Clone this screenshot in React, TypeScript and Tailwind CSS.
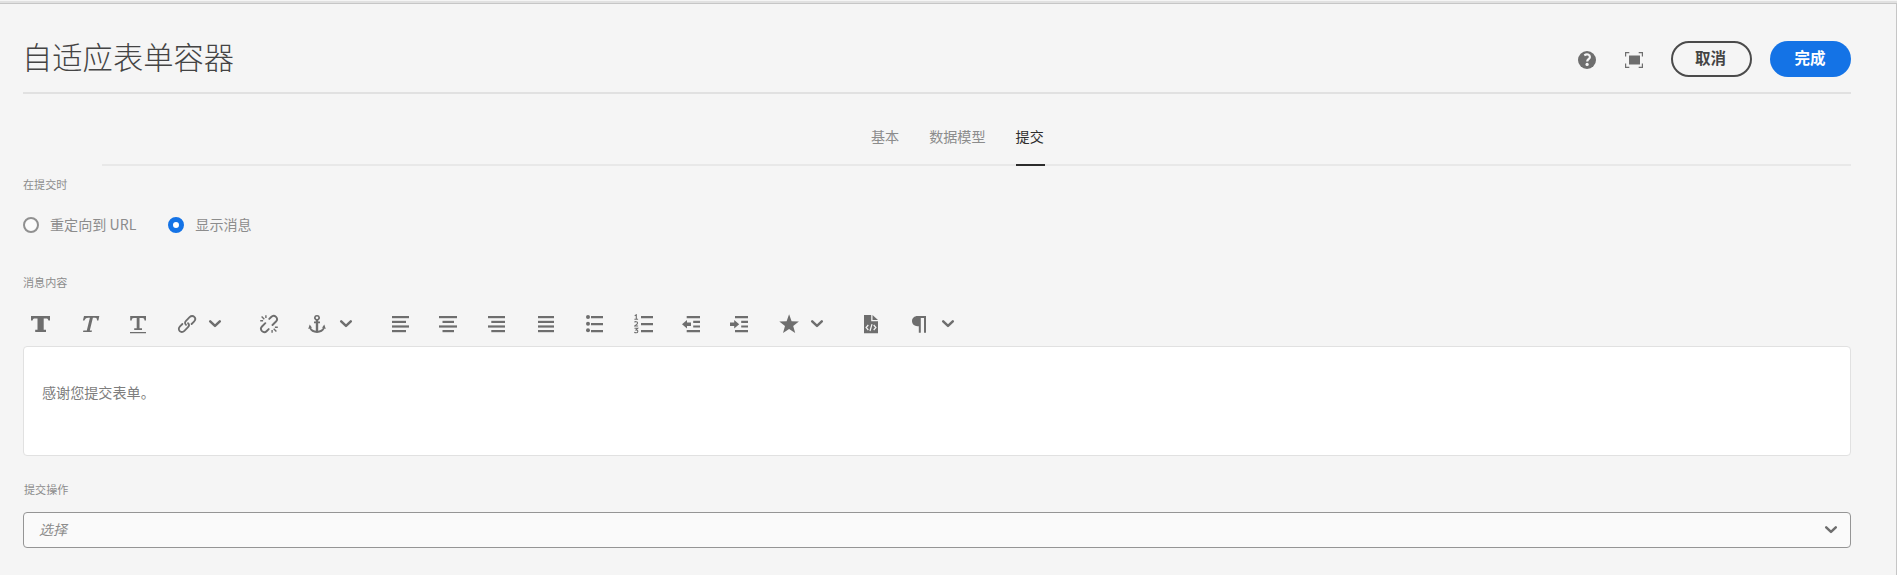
import React from "react";

type IconProps = { className?: string; children: React.ReactNode };

function Icon({ className = "", children }: IconProps) {
  return (
    <svg viewBox="0 0 20 20" width="20" height="20" fill="#6e6e6e" className={`block shrink-0 ${className}`}>
      {children}
    </svg>
  );
}

function Chevron({ className = "" }: { className?: string }) {
  return (
    <Icon className={className}>
      <path d="M5.2 7.3 L10 11.9 L14.8 7.3" fill="none" stroke="#6e6e6e" strokeWidth="2.5" strokeLinecap="round" strokeLinejoin="round" />
    </Icon>
  );
}

function Lines({ rows }: { rows: [number, number][] }) {
  const tops = [2, 6.8, 11.4, 16];
  return (
    <>
      {rows.map(([x, w], i) => (
        <rect key={i} x={x} y={tops[i]} width={w} height="2.2" />
      ))}
    </>
  );
}

function Toolbar() {
  return (
    <div className="mt-[24px] flex h-5 items-center pl-[7px]">
      <Icon>
        <path d="M1 2h19v4.600h-1.600c-.2-1.500-.8-2.100-2.400-2.100h-2.300v11.300h2.300V18H5.200v-2.200h2.300V4.500H5c-1.600 0-2.200.6-2.400 2.100H1z" />
      </Icon>
      <Icon className="ml-[30px]">
        <path d="M4 2H19.300L18.400 6.400H17C17 4.400 16.500 3.700 15 3.700H12.900L9.800 16.400H12L11.600 18H3L3.400 16.400H6.800L9.900 3.700H8.200C6.400 3.700 5.400 4.400 4.400 6.400H2.900z" />
      </Icon>
      <Icon className="ml-[28px]">
        <path d="M2.200 2h15.800v4.400h-1.500c-.1-1.600-.7-2.300-2.100-2.300h-2.900v10.100h2.500v1.800H6.200v-1.800h2.500V4.100H5.800c-1.400 0-2 .7-2.100 2.300H2.200zM2 18h16v1.200H2z" />
      </Icon>
      <Icon className="ml-[29px]">
        <g fill="none" stroke="#6e6e6e" strokeWidth="1.800" strokeLinecap="round">
          <path d="M9 10.900c-1.500-1.500-1.200-2.900 0-4.100l3.600-3.600c1.700-1.700 3.600-1.400 4.700-.3 1.200 1.200 1.300 3.100-.3 4.700l-2.400 2.400" />
          <path d="M11 9.100c1.500 1.500 1.200 2.900 0 4.100l-3.600 3.600c-1.700 1.700-3.600 1.400-4.700.3-1.200-1.200-1.300-3.100.3-4.700l2.400-2.400" />
        </g>
      </Icon>
      <Chevron className="ml-[8px]" />
      <Icon className="ml-[34px]">
        <g fill="none" stroke="#6e6e6e" strokeWidth="1.900" strokeLinecap="round">
          <path d="M10.300 4.900l1.900-1.900c1.500-1.500 3.500-1.300 4.800-.1 1.300 1.300 1.300 3.200 0 4.600l-3.500 3.500" />
          <path d="M9.700 15.100l-1.900 1.900c-1.500 1.500-3.500 1.300-4.800.1-1.300-1.300-1.300-3.200 0-4.600l3.300-3.300" />
        </g>
        <path d="M6.900 1.200v2.900M2.600 2.600l2.700 2.600M1.200 6.700h2.900M13.100 15.900v2.900M14.700 14.700l2.700 2.700M15.900 13.300h2.900" fill="none" stroke="#6e6e6e" strokeWidth="1.400" />
      </Icon>
      <Icon className="ml-[28px]">
        <path d="M10 .9a2.900 2.900 0 0 0-1.200 5.600v1.100H7v1.700h1.800v7.400c-2.600-.3-4.500-1.600-5-3.100l1.400.3-2.500-3.500L1.200 15l1.200-.4C3.400 17.300 6.300 19 10 19s6.600-1.700 7.600-4.400l1.200.4-1.500-4.600-2.500 3.500 1.400-.3c-.5 1.500-2.400 2.800-5 3.100V9.300H13V7.600h-1.800V6.500A2.900 2.900 0 0 0 10 .9zm0 1.600a1.300 1.300 0 1 1 0 2.600 1.300 1.300 0 0 1 0-2.600z" />
      </Icon>
      <Chevron className="ml-[9px]" />
      <Icon className="ml-[34px]"><Lines rows={[[2, 17], [2, 14], [2, 17], [2, 14]]} /></Icon>
      <Icon className="ml-[28px]"><Lines rows={[[1, 18], [4.500, 11.500], [1, 18], [4.500, 11.500]]} /></Icon>
      <Icon className="ml-[28px]"><Lines rows={[[2, 17], [5.300, 13.700], [2, 17], [5.300, 13.700]]} /></Icon>
      <Icon className="ml-[30px]"><Lines rows={[[2, 16], [2, 16], [2, 16], [2, 16]]} /></Icon>
      <Icon className="ml-[29px]">
        <circle cx="3" cy="2.900" r="2" /><circle cx="3" cy="9.800" r="2" /><circle cx="3" cy="16.300" r="2" />
        <path d="M6 2.100h12v2.200H6zM6 9h12v2.200H6zM6 16h12v2.200H6z" />
      </Icon>
      <Icon className="ml-[29px]">
        <path d="M7 2.100h12v2.200H7zM7 9h12v2.200H7zM7 16h12v2.200H7z" />
        <path d="M.7 1.700L2.300.8v4.400M.4 5.200h3.700M.4 8.300C1 7.400 3.600 7.300 3.600 9c0 1-1.500 1.800-2.900 3h3.400M.5 14.200h3.200L2 16c2.600 0 2.200 2.900 0 2.800-.7 0-1.300-.2-1.700-.5" fill="none" stroke="#6e6e6e" strokeWidth="1.100" />
      </Icon>
      <Icon className="ml-[27px]">
        <path d="M5.700 2.100H19v2.200H5.700zM12.200 6.800H19V9h-6.800zM12.200 11.400H19v2.200h-6.800zM5.700 16H19v2.200H5.700zM1 10.200l5-4.300v2.500h4v3.600H6v2.500z" />
      </Icon>
      <Icon className="ml-[28px]">
        <path d="M6 2.100h13v2.200H6zM12.200 6.800H19V9h-6.800zM12.200 11.400H19v2.200h-6.800zM6 16h13v2.200H6zM1 8.400h4.200V5.900l5 4.300-5 4.300V12H1z" />
      </Icon>
      <Icon className="ml-[30px]">
        <path d="M10.100.3l2.500 6.900 7.300.3-5.700 4.500 2 7.100-6.100-4.200L4 19.100l2-7.100L.3 7.500l7.300-.3z" />
      </Icon>
      <Chevron className="ml-[8px]" />
      <Icon className="ml-[34px]">
        <path d="M3 1h7.200v6.300H17V19.200H3zM11.500 1l5.500 5h-5.500z" />
        <path d="M7.300 11l-2.200 2.500 2.200 2.500M12.700 11l2.200 2.500-2.200 2.500M11 10.200L9 17" fill="none" stroke="#f5f5f5" strokeWidth="1.200" />
      </Icon>
      <Icon className="ml-[28px]">
        <path d="M8.500 2H17v16.800h-2V4h-3.200v14.800h-2V12.200H8.500C5.300 12.200 3 10 3 7.100S5.300 2 8.500 2z" />
      </Icon>
      <Chevron className="ml-[9px]" />
    </div>
  );
}

export default function App() {
  return (
    <div className="h-[575px] w-full overflow-hidden bg-[#f5f5f5] pt-px font-['Noto_Sans_CJK_SC','Noto_Sans',sans-serif] text-[#8c8c8c]">
      <div className="flex h-[574px] flex-col border-t-2 border-[#e1e1e1]">
        <div className="flex-1 border-t border-r border-[#c6c6c6] pr-[45px] pl-[23px]">
          <header className="flex h-[90px] justify-between border-b-2 border-[#e1e1e1]">
            <h1 className="-ml-px mt-[30px] text-[30.300px] leading-[44px] font-light text-[#444444]">自适应表单容器</h1>
            <div className="mt-[37px] flex h-9 items-center">
              <svg width="18" height="18" viewBox="0 0 18 18" className="mt-[2px] mr-[29px] block">
                <circle cx="9" cy="9" r="9" fill="#6e6e6e" />
                <path d="M6.300 4.300c2.600-1.700 5.600-.8 5.600 1.600 0 2.300-2.700 2.300-2.700 4.600" fill="none" stroke="#f5f5f5" strokeWidth="2.200" />
                <circle cx="9.100" cy="13.400" r="1.600" fill="#f5f5f5" />
              </svg>
              <svg width="18" height="16" viewBox="0 0 18 16" className="mt-[2px] mr-[28px] block">
                <path d="M4 3.500h11v9H4z" fill="#6e6e6e" />
                <path d="M4.300.6H.6v4M13.700.6h3.700v4M4.300 15.400H.6v-4M13.700 15.400h3.700v-4" fill="none" stroke="#6e6e6e" strokeWidth="1.200" />
              </svg>
              <button className="mr-[18px] flex h-9 w-[81px] items-center justify-center rounded-full border-2 border-[#4b4b4b] pr-[2px] pb-[2px] text-[15.500px] leading-none font-bold text-[#444444]">取消</button>
              <button className="flex h-9 w-[81px] items-center justify-center rounded-full bg-[#1473e6] pr-px pb-[2px] text-[15.500px] leading-none font-bold text-white">完成</button>
            </div>
          </header>

          <nav className="ml-[79px] flex h-[72px] border-b-2 border-[#e8e8e8] pl-[769px] text-[14.100px] leading-5">
            <span className="mt-[32px]">基本</span>
            <span className="mt-[32px] ml-[30px]">数据模型</span>
            <span className="-mb-[2px] ml-[30px] h-[72px] w-[29px] border-b-2 border-[#2c2c2c] pt-[32px] text-[#2c2c2c]">提交</span>
          </nav>

          <div className="mt-[10px] text-[11.100px] leading-4">在提交时</div>
          <div className="mt-[23px] flex h-5 items-center text-[14.100px] leading-5">
            <span className="h-4 w-4 rounded-full border-2 border-[#909090] bg-[#fbfbfb]" />
            <span className="ml-[11px] pb-[2px]">重定向到 URL</span>
            <span className="ml-[32px] h-4 w-4 rounded-full border-[5px] border-[#1473e6] bg-white" />
            <span className="ml-[11px] pb-[2px]">显示消息</span>
          </div>

          <div className="mt-[39px] text-[11.100px] leading-4">消息内容</div>
          <Toolbar />

          <div className="mt-[12px] h-[110px] rounded-[4px] border border-[#e1e1e1] bg-white pt-[35px] pl-[18px] text-[14.100px] leading-5 text-[#7d7d7d]">感谢您提交表单。</div>

          <div className="mt-[25px] pl-px text-[11.100px] leading-4">提交操作</div>
          <div className="mt-[15px] flex h-9 items-center justify-between rounded-[4px] border border-[#959595] bg-[#fafafa] pr-[9px] pl-[15px] text-[14px] leading-5">
            <span className="pb-[3px] italic">选择</span>
            <Chevron />
          </div>
        </div>
      </div>
    </div>
  );
}
